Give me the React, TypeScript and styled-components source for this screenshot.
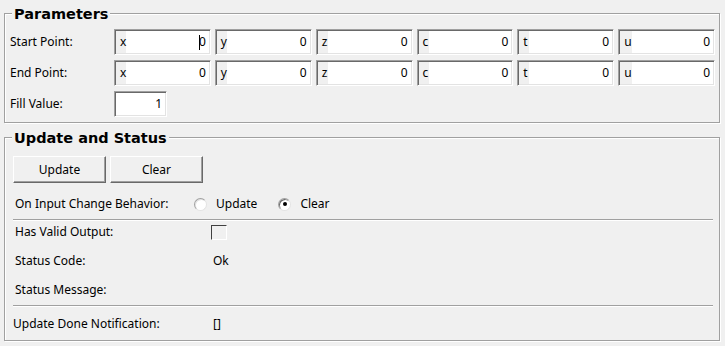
import * as React from "react";
import styled, { createGlobalStyle } from "styled-components";

const GlobalStyle = createGlobalStyle`
  html, body {
    margin: 0;
    padding: 0;
    background: #f0f0f0;
  }
  body {
    font-family: "Noto Sans", "Liberation Sans", sans-serif;
    font-size: 12px;
    line-height: 16px;
    color: #000;
  }
`;

const Page = styled.div`
  display: flex;
  flex-direction: column;
  gap: 14px;
  width: 725px;
  height: 346px;
  box-sizing: border-box;
  padding: 13px 5px 0 4px;
`;

const Group = styled.section`
  display: flex;
  flex-direction: column;
  border: 1px solid #a0a0a0;
  box-shadow: 1px 1px 0 #fff, inset 1px 1px 0 #fff;
`;

const GroupTitle = styled.h2`
  align-self: flex-start;
  margin: -9px 0 0 7px;
  padding: 0 2px;
  background: #f0f0f0;
  font-family: "DejaVu Sans", "Liberation Sans", sans-serif;
  font-weight: bold;
  font-size: 14.5px;
  line-height: 18px;
`;

const ParamGrid = styled.div`
  display: grid;
  grid-template-columns: 104px 1fr;
  grid-auto-rows: 26px;
  row-gap: 5px;
  margin-top: 6px;
  padding: 0 4px 5px 5px;
`;

const Label = styled.div`
  display: flex;
  align-items: center;
  white-space: nowrap;
`;

const FieldRow = styled.div`
  display: grid;
  grid-template-columns: repeat(6, 1fr);
  column-gap: 4px;
`;

const Field = styled.div<{ $width?: number }>`
  display: flex;
  align-items: stretch;
  box-sizing: border-box;
  height: 26px;
  width: ${(p) => (p.$width ? `${p.$width}px` : "auto")};
  padding: 1px 4px 1px 1px;
  background: #fff;
  border: 1px solid;
  border-color: #a0a0a0 #fff #fff #a0a0a0;
  box-shadow: inset 1px 1px 0 #696969, inset -1px -1px 0 #e3e3e3;
`;

const Tag = styled.span`
  flex: 0 0 10px;
  box-sizing: border-box;
  display: flex;
  align-items: center;
  padding-left: 4px;
  background: #f0f0f0;
  white-space: nowrap;
`;

const Value = styled.span`
  flex: 1;
  display: flex;
  align-items: center;
  justify-content: flex-end;
`;

const Caret = styled.span`
  display: inline-block;
  width: 1px;
  height: 15px;
  margin-right: -1px;
  background: #000;
`;

const ButtonRow = styled.div`
  display: flex;
  gap: 4px;
  margin-top: 9px;
  padding-left: 8px;
`;

const Button = styled.button`
  width: 93px;
  height: 27px;
  box-sizing: border-box;
  padding: 0;
  font: inherit;
  color: #000;
  background: #f0f0f0;
  border: 1px solid;
  border-color: #fff #696969 #696969 #fff;
  box-shadow: inset -1px -1px 0 #a0a0a0;
`;

const RadioRow = styled.div`
  display: flex;
  align-items: center;
  height: 26px;
  margin-top: 8px;
  padding-left: 10px;
`;

const RadioLabel = styled.span`
  width: 179px;
  white-space: nowrap;
`;

const RadioOption = styled.label`
  display: flex;
  align-items: center;
  gap: 9px;
  margin-right: 21px;
`;

const RadioDot = styled.span<{ $checked?: boolean }>`
  display: flex;
  align-items: center;
  justify-content: center;
  width: 13px;
  height: 13px;
  box-sizing: border-box;
  border-radius: 50%;
  background: #fff;
  border: 1px solid;
  border-color: #a0a0a0 #e3e3e3 #e3e3e3 #a0a0a0;
  box-shadow: inset 1px 1px 0 ${(p) => (p.$checked ? "#696969" : "#e3e3e3")};

  &::after {
    content: "";
    display: ${(p) => (p.$checked ? "block" : "none")};
    width: 4px;
    height: 4px;
    border-radius: 50%;
    background: #000;
  }
`;

const Separator = styled.hr`
  margin: 2px 6px 0 8px;
  height: 0;
  border: 0;
  border-top: 1px solid #a0a0a0;
  border-bottom: 1px solid #fff;
`;

const StatusGrid = styled.div<{ $labelWidth: number; $inset: number }>`
  display: grid;
  grid-template-columns: ${(p) => p.$labelWidth}px 1fr;
  grid-auto-rows: 16px;
  row-gap: 13px;
  padding: 3px 0 7px ${(p) => p.$inset}px;
`;

const NoticeGrid = styled(StatusGrid)`
  padding: 9px 0 8px ${(p) => p.$inset}px;
`;

const CheckBox = styled.span`
  display: block;
  width: 16px;
  height: 15px;
  box-sizing: border-box;
  margin: 0 0 0 -2px;
  align-self: center;
  border: 1px solid;
  border-color: #404040 #fff #fff #404040;
`;

const axes = ["x", "y", "z", "c", "t", "u"];

function PointFields({ caret }: { caret?: boolean }) {
  return (
    <FieldRow>
      {axes.map((a, i) => (
        <Field key={a}>
          <Tag>{a}</Tag>
          <Value>
            {caret && i === 0 && <Caret />}0
          </Value>
        </Field>
      ))}
    </FieldRow>
  );
}

export default function App() {
  const [mode, setMode] = React.useState("clear");
  return (
    <>
      <GlobalStyle />
      <Page>
        <Group>
          <GroupTitle>Parameters</GroupTitle>
          <ParamGrid>
            <Label>Start Point:</Label>
            <PointFields caret />
            <Label>End Point:</Label>
            <PointFields />
            <Label>Fill Value:</Label>
            <Field $width={53}>
              <Value>1</Value>
            </Field>
          </ParamGrid>
        </Group>

        <Group>
          <GroupTitle>Update and Status</GroupTitle>
          <ButtonRow>
            <Button type="button">Update</Button>
            <Button type="button">Clear</Button>
          </ButtonRow>
          <RadioRow>
            <RadioLabel>On Input Change Behavior:</RadioLabel>
            <RadioOption onClick={() => setMode("update")}>
              <RadioDot $checked={mode === "update"} />
              Update
            </RadioOption>
            <RadioOption onClick={() => setMode("clear")}>
              <RadioDot $checked={mode === "clear"} />
              Clear
            </RadioOption>
          </RadioRow>
          <Separator />
          <StatusGrid $labelWidth={198} $inset={10}>
            <Label>Has Valid Output:</Label>
            <CheckBox />
            <Label>Status Code:</Label>
            <Label>Ok</Label>
            <Label>Status Message:</Label>
            <Label />
          </StatusGrid>
          <Separator style={{ marginTop: 0 }} />
          <NoticeGrid $labelWidth={200} $inset={8}>
            <Label>Update Done Notification:</Label>
            <Label>[]</Label>
          </NoticeGrid>
        </Group>
      </Page>
    </>
  );
}
